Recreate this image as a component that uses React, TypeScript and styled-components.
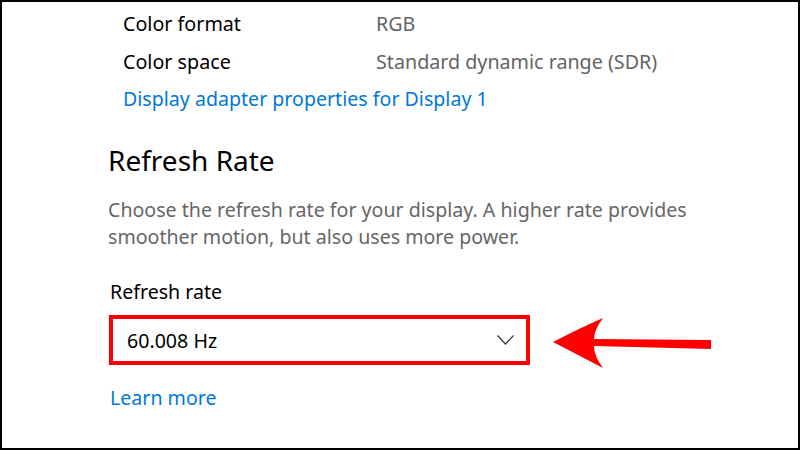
import styled, { createGlobalStyle } from "styled-components";

const GlobalStyle = createGlobalStyle`
  html, body {
    margin: 0;
    padding: 0;
    background: #ffffff;
  }
  body {
    font-family: "Noto Sans", "Open Sans", "Liberation Sans", sans-serif;
  }
`;

const Frame = styled.div`
  box-sizing: border-box;
  width: 800px;
  height: 450px;
  border: 2px solid #000;
  background: #fff;
  padding: 2px 0 0 106px;
  overflow: hidden;
`;

const PropList = styled.div`
  margin-left: 15px;
`;

const PropRow = styled.div`
  display: grid;
  grid-template-columns: 253px 1fr;
  height: 38px;
  align-items: center;
  font-size: 19.7px;
`;

const PropLabel = styled.span`
  color: #000;
`;

const PropValue = styled.span`
  color: #646464;
`;

const Link = styled.a<{ $indent?: number; $top?: number }>`
  display: block;
  margin-left: ${(p) => p.$indent ?? 0}px;
  margin-top: ${(p) => p.$top ?? 0}px;
  font-size: 19.6px;
  line-height: 37px;
  color: #0078d7;
  text-decoration: none;
  cursor: pointer;
`;

const SectionTitle = styled.h2`
  margin: 25px 0 0;
  font-size: 28px;
  line-height: 36px;
  font-weight: 400;
  color: #000;
`;

const Description = styled.p`
  margin: 18px 0 0;
  width: 600px;
  font-size: 19.6px;
  line-height: 27px;
  color: #666;
`;

const FieldLabel = styled.div`
  margin-top: 28px;
  margin-left: 2px;
  font-size: 19.6px;
  line-height: 28px;
  color: #000;
`;

const DropRow = styled.div`
  display: flex;
  align-items: flex-start;
  height: 50px;
  margin-top: 9px;
  margin-left: 1px;
`;

const Dropdown = styled.div`
  box-sizing: border-box;
  width: 421px;
  height: 50px;
  border: 4.5px solid #ff0000;
  display: flex;
  align-items: center;
  justify-content: space-between;
  padding: 0 12px 0 14px;
  font-size: 19.6px;
  color: #000;
`;

const Pointer = styled.svg`
  margin-left: 22px;
  margin-top: 1px;
  flex: none;
`;

const Chevron = () => (
  <svg width="17" height="10" viewBox="0 0 17 10">
    <polyline points="0.5,0.5 8.5,9 16.5,0.5" fill="none" stroke="#333" strokeWidth="1.2" />
  </svg>
);

export default function App() {
  return (
    <>
      <GlobalStyle />
      <Frame>
        <PropList>
          <PropRow>
            <PropLabel>Color format</PropLabel>
            <PropValue>RGB</PropValue>
          </PropRow>
          <PropRow>
            <PropLabel>Color space</PropLabel>
            <PropValue>Standard dynamic range (SDR)</PropValue>
          </PropRow>
          <Link>Display adapter properties for Display 1</Link>
        </PropList>

        <SectionTitle>Refresh Rate</SectionTitle>
        <Description>
          Choose the refresh rate for your display. A higher rate provides smoother motion, but also
          uses more power.
        </Description>

        <FieldLabel>Refresh rate</FieldLabel>
        <DropRow>
          <Dropdown>
            <span>60.008 Hz</span>
            <Chevron />
          </Dropdown>
          {/* red callout arrow */}
          <Pointer width="162" height="54" viewBox="0 0 162 54">
            <path
              d="M1 26 Q28 12 51 2 Q42 14 42 23 L159 24 L159 33 L42 30 Q42 40 51 52 Q28 40 1 26 Z"
              fill="#ff0000"
            />
          </Pointer>
        </DropRow>

        <Link $indent={2} $top={14}>Learn more</Link>
      </Frame>
    </>
  );
}
